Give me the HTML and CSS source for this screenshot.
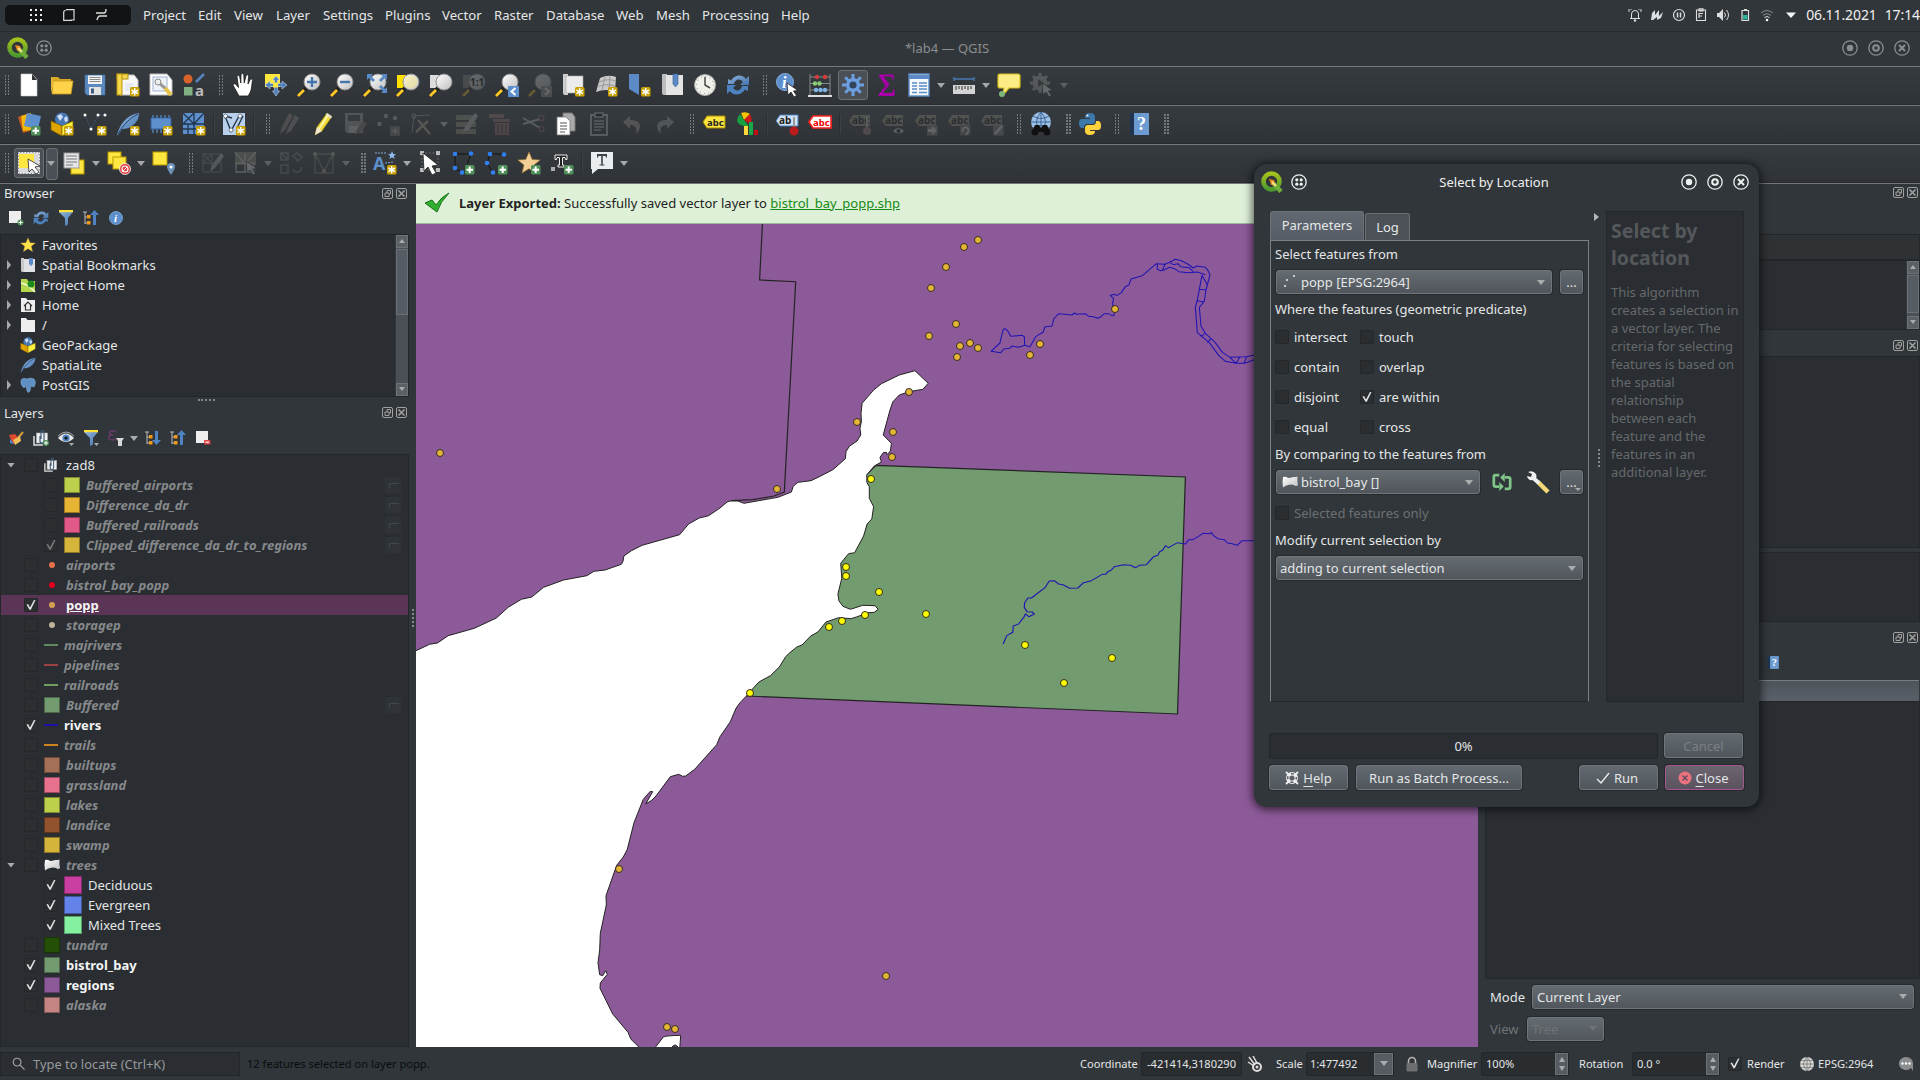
FILE: index.html
```html
<!DOCTYPE html>
<html lang="en">
<head>
<meta charset="utf-8">
<title>*lab4 — QGIS</title>
<link rel="stylesheet" href="styles.css">
</head>
<body>
<svg class="paints" aria-hidden="true">
<defs>
<linearGradient id="gBlue" x1="0" y1="0" x2="1" y2="1"><stop offset="0" stop-color="#8fb3de"/><stop offset="1" stop-color="#4474ad"/></linearGradient>
<linearGradient id="gWhite" x1="0" y1="0" x2="1" y2="1"><stop offset="0" stop-color="#fff"/><stop offset="1" stop-color="#bfbfbf"/></linearGradient>
<linearGradient id="gGreen" x1="0" y1="0" x2="0" y2="1"><stop offset="0" stop-color="#a5c11c"/><stop offset="1" stop-color="#4c9a2f"/></linearGradient>
</defs>
</svg>
<svg class="sprite" aria-hidden="true">
<symbol id="b-new" viewBox="0 0 24 24"><rect x="14" y="14" width="9.500" height="9.500" rx="1.500" fill="#c8a100"/><path d="M18.700 15v7.500M15.400 17l6.600 3.600M22 17l-6.600 3.600" stroke="#fff" stroke-width="1.500"/></symbol>
<symbol id="b-add" viewBox="0 0 24 24"><rect x="14" y="14" width="9.500" height="9.500" rx="1.500" fill="#4f8f58"/><path d="M18.700 15.500v6.500M15.500 18.700h6.500" stroke="#fff" stroke-width="2"/></symbol>
<symbol id="logo" viewBox="0 0 22 22"><circle cx="10.500" cy="10.500" r="8" fill="none" stroke="url(#gGreen)" stroke-width="4.600"/><path d="M11 11l9 9.500" stroke="#6fae3a" stroke-width="4.500"/><path d="M8 8l5 1 1 4-3.500 1z" fill="#f08c1e"/><path d="M11 11l4 4" stroke="#fbe08a" stroke-width="2"/></symbol>
<symbol id="file" viewBox="0 0 24 24"><path d="M4 1h11l5 5.500V23H4z" fill="#fff" stroke="#ccc" stroke-width=".6"/><path d="M15 1v6h5z" fill="#333"/></symbol>
<symbol id="open" viewBox="0 0 24 24"><path d="M1 4h7l2 2h11v4H1z" fill="#d9a928"/><path d="M3 8h20l-2 13H2z" fill="#ffd24a" stroke="#c79a1c" stroke-width=".8"/><path d="M1 4v16l3-11" fill="#e5b738"/></symbol>
<symbol id="save" viewBox="0 0 24 24"><path d="M2 2h20v20H4l-2-2z" fill="#5b8ac0" stroke="#456e9e" stroke-width=".6"/><rect x="5" y="2.500" width="14" height="8.500" fill="#f2f2f2"/><path d="M6.500 4.500h11M6.500 6.500h11M6.500 8.500h11" stroke="#8a8a8a"/><rect x="6" y="14" width="12" height="8" fill="#e3e3e3"/><rect x="8" y="15.500" width="3" height="5" fill="#3d5d85"/></symbol>
<symbol id="layout" viewBox="0 0 24 24"><path d="M4 2h14l4 5v15H4z" fill="#f7f7f7" stroke="#c4c4c4"/><rect x="1" y="1" width="11" height="5" fill="#f6d94a" stroke="#b8920e"/><rect x="1" y="1" width="5" height="21" fill="#f6d94a" stroke="#b8920e"/><rect x="9" y="10" width="9" height="8" fill="#e7ecf4"/><use href="#b-new"/></symbol>
<symbol id="layoutmgr" viewBox="0 0 24 24"><path d="M1 1h17l5 6v15H1z" fill="#fff" stroke="#bbb"/><rect x="4" y="4" width="14" height="14" fill="#eef1f6" stroke="#9fb2d0"/><path d="M9 9l8 7" stroke="#9a9a9a" stroke-width="3"/><circle cx="9" cy="9" r="3" fill="#eee" stroke="#8a8a8a"/><path d="M16 15l6 7" stroke="#e6c24a" stroke-width="4"/></symbol>
<symbol id="style" viewBox="0 0 24 24"><circle cx="6" cy="6" r="4.500" fill="#d9622b"/><path d="M14 9l8-8" stroke="#5585bf" stroke-width="2.500"/><rect x="2" y="14" width="8.500" height="8.500" fill="#7fb182"/><text x="13" y="23" font-size="15" font-weight="bold" fill="#bbb">a</text></symbol>
<symbol id="hand" viewBox="0 0 24 24"><path d="M8 23L2.500 13c-1-2 1-3 2.500-1.500l2.500 3L6 4c0-2 2.400-2 2.800 0l1 6L10 2c.3-2 2.700-2 2.800 0l.4 8 1.800-7c.4-2 2.700-1.500 2.500.5L17 11l2-4c.8-1.800 2.800-1 2.400.8C20.500 13 21 18 17 23z" fill="#fff" stroke="#1a1a1a" stroke-width=".8"/></symbol>
<symbol id="pansel" viewBox="0 0 24 24"><rect x="1" y="1" width="15" height="13" fill="#ffe83d"/><path d="M12 3l3.500 4h-2v3.500H18V8l5 4-5 4v-2.500h-4.500V18h2L12 23l-3.500-5h2v-4.500H6V16l-5-4 5-4v2.500h4.500V7h-2z" fill="#4d80bd" stroke="#d5e2f2" stroke-width=".5"/><rect x="9" y="9.500" width="5" height="5" fill="#ffe83d"/></symbol>
<symbol id="glass" viewBox="0 0 24 24"><path d="M9 15l-8 8" stroke="#222" stroke-width="4"/><path d="M7 17l-6 6" stroke="#ffc928" stroke-width="2.800"/><circle cx="15" cy="9" r="8" fill="url(#gWhite)" stroke="#8c8c8c"/></symbol>
<symbol id="zin" viewBox="0 0 24 24"><use href="#glass"/><path d="M15 4v10M10 9h10" stroke="#4474ad" stroke-width="2.400"/></symbol>
<symbol id="zout" viewBox="0 0 24 24"><use href="#glass"/><path d="M10 9h10" stroke="#4474ad" stroke-width="2.400"/></symbol>
<symbol id="zfull" viewBox="0 0 24 24"><use href="#glass"/><path d="M4 1h6L8 3l4 4-2 2-4-4-2 2zM24 1v6l-2-2-4 4-2-2 4-4-2-2zM24 20h-6l2-2-4-4 2-2 4 4 2-2z" fill="#5a8ac6"/></symbol>
<symbol id="zsel" viewBox="0 0 24 24"><rect x="1" y="2" width="9" height="13" fill="#ffe100"/><use href="#glass"/><circle cx="15" cy="9" r="6.500" fill="#f3e79a" opacity=".6"/></symbol>
<symbol id="zlay" viewBox="0 0 24 24"><rect x="1" y="2" width="9" height="13" fill="#ddd"/><use href="#glass"/></symbol>
<symbol id="znat" viewBox="0 0 24 24"><rect x="1" y="2" width="9" height="13" fill="#888"/><use href="#glass"/><text x="8" y="13" font-size="10" font-weight="bold" fill="#000">1:1</text></symbol>
<symbol id="zlast" viewBox="0 0 24 24"><use href="#glass"/><rect x="13" y="13" width="11" height="11" fill="#5b8fcd"/><path d="M20.500 15l-4 3.500 4 3.500" fill="none" stroke="#fff" stroke-width="2"/></symbol>
<symbol id="znext" viewBox="0 0 24 24"><use href="#glass"/><rect x="13" y="13" width="11" height="11" fill="#999"/><path d="M17 15l4 3.500-4 3.500" fill="none" stroke="#fff" stroke-width="2"/></symbol>
<symbol id="newmap" viewBox="0 0 24 24"><path d="M2 1h5v21H4a2 2 0 01-2-2z" fill="#cfcfcf"/><path d="M5 3h17v17H5z" fill="#ececec" stroke="#aaa" stroke-width=".6"/><use href="#b-new"/></symbol>
<symbol id="new3d" viewBox="0 0 24 24"><path d="M6 5q8-4 16-1l-1 15q-9-4-19 0z" fill="#c9c9c9"/><path d="M5 9q9-4 17-1M3 14q9-4 18-1M11 4l-3 13M16 3l-1 13" stroke="#999" fill="none"/><use href="#b-new"/></symbol>
<symbol id="newbm" viewBox="0 0 24 24"><path d="M2 1h10v21l-5-3-5-3z" fill="#5b8ac6"/><use href="#b-new"/></symbol>
<symbol id="bookm" viewBox="0 0 24 24"><path d="M2 1h5v21H4a2 2 0 01-2-2z" fill="#bdbdbd"/><path d="M6 2h17v20H6z" fill="#e4e4e4"/><path d="M13 1h5v10l-2.500 3L13 11z" fill="#5b8ac6" stroke="#345d93" stroke-width=".6"/></symbol>
<symbol id="clock" viewBox="0 0 24 24"><circle cx="12" cy="12" r="10.500" fill="#f1f1ec" stroke="#a9a9a4"/><path d="M12 4v8l5 3" fill="none" stroke="#4a4a4a" stroke-width="1.500"/><circle cx="12" cy="12" r="8.500" fill="none" stroke="#888" stroke-dasharray="1 3.450"/></symbol>
<symbol id="refresh" viewBox="0 0 24 24"><path d="M2 11V6l3 1.500C9 1 17 1 20 6l3-3v9h-9l3-3c-3-4-8-3-9 2z" fill="url(#gBlue)"/><path d="M22 13v5l-3-1.500C15 23 7 23 4 18l-3 3v-9h9l-3 3c3 4 8 3 9-2z" fill="#4c82c0"/></symbol>
<symbol id="cursor" viewBox="0 0 24 24"><path d="M12 10l1 12 3-3 3 5 2.500-1.500-3-4.500 4.500-.5z" fill="#fff" stroke="#222" stroke-width=".8"/></symbol>
<symbol id="info" viewBox="0 0 24 24"><circle cx="10" cy="9" r="8.500" fill="#5d8fcc" stroke="#86abd8"/><text x="7" y="15" font-size="16" font-style="italic" font-weight="bold" font-family="Liberation Serif,serif" fill="#fff">i</text><use href="#cursor"/></symbol>
<symbol id="abacus" viewBox="0 0 24 24"><path d="M2 1v21M22 1v21M2 4h20M2 10.500h20M2 17h20" stroke="#888"/><path d="M0 23h24" stroke="#ddd" stroke-width="2"/><g fill="#d33c3c"><circle cx="9" cy="4" r="2.200"/><circle cx="17" cy="4" r="2.200"/></g><g fill="#8ccb76"><circle cx="7" cy="10.500" r="2.200"/><circle cx="11.500" cy="10.500" r="2.200"/></g><g fill="#7fb4e6"><circle cx="8" cy="17" r="2.200"/><circle cx="12.500" cy="17" r="2.200"/><circle cx="17" cy="17" r="2.200"/></g></symbol>
<symbol id="gear" viewBox="0 0 24 24"><path d="M12 1v22M1 12h22M4.200 4.200l15.600 15.600M19.800 4.200L4.200 19.800" stroke="#6c9fe0" stroke-width="3"/><circle cx="12" cy="12" r="7" fill="#6c9fe0"/><circle cx="12" cy="12" r="3.600" fill="#33445c"/></symbol>
<symbol id="sigma" viewBox="0 0 24 24"><path d="M5 1.500h14.500v5h-1C18 4 17 3.500 14 3.500H9.500l6 8-6.500 8.500h6c3 0 4-1 4.500-3.500h1V23H4.500v-1.500L11.500 13 5 3z" fill="#a800a8"/></symbol>
<symbol id="table" viewBox="0 0 24 24"><rect x="2" y="1" width="20" height="22" fill="#f5f8fb" stroke="#5b8ac6" stroke-width="1.400"/><path d="M2 4h20" stroke="#5b8ac6" stroke-width="4"/><path d="M5 10h5M5 13h5M5 16h5M5 19.500h5M12 10h8M12 13h8M12 16h8M12 19.500h8" stroke="#5b8ac6" stroke-width="1.500"/></symbol>
<symbol id="ruler" viewBox="0 0 24 24"><path d="M2 6h20M2 4v4M22 4v4" stroke="#4a78b2" stroke-width="1.400"/><rect x="1" y="12" width="22" height="9" fill="#d4d4d4"/><path d="M4 13v4M7 13v3M10 13v4M13 13v3M16 13v4M19 13v3" stroke="#333"/></symbol>
<symbol id="tip" viewBox="0 0 24 24"><path d="M3 1h18q2 0 2 2v10q0 2-2 2h-9l-6 7 1-7H3q-2 0-2-2V3q0-2 2-2z" fill="#fbec86" stroke="#dcbf1d" stroke-width="1.200"/><circle cx="5" cy="21" r="3" fill="#7db57d"/></symbol>
<symbol id="gearrun" viewBox="0 0 24 24"><path d="M10 0v20M0 10h20M3 3l14 14M17 3L3 17" stroke="#bbb" stroke-width="3"/><circle cx="10" cy="10" r="7.500" fill="#bbb"/><path d="M8 6v8l6-4z" fill="#444"/><use href="#cursor"/></symbol>
<symbol id="ds" viewBox="0 0 24 24"><path d="M1 5l9-3 3 17-7 2z" fill="#c65a1e"/><path d="M4 4l10-3 1 17-9 1z" fill="#f0b90b"/><path d="M10 1l14 3-3 13-14-3z" fill="#5d8fcc"/><use href="#b-add"/></symbol>
<symbol id="gpkgbox" viewBox="0 0 24 24"><circle cx="12" cy="7.500" r="7" fill="#4677b4"/><path d="M7 4l4-2 2 3-3 4zM14 6l3-2 1 5-3 1z" fill="#cfe0f2"/><path d="M1 9l11 5v10L1 18z" fill="#e0a500" stroke="#7d5c00" stroke-width=".7"/><path d="M23 9l-11 5v10l11-6z" fill="#fff23d" stroke="#7d5c00" stroke-width=".7"/></symbol>
<symbol id="gpkg" viewBox="0 0 24 24"><use href="#gpkgbox"/><use href="#b-new"/></symbol>
<symbol id="shp" viewBox="0 0 24 24"><path d="M2 3l6 14L15 3h7" fill="none" stroke="#40618f" stroke-dasharray="1.500 1.500"/><g fill="#fff"><circle cx="2" cy="3" r="1.500"/><circle cx="8" cy="17" r="1.500"/><circle cx="15" cy="3" r="1.500"/><circle cx="22" cy="3" r="1.500"/></g><use href="#b-new"/></symbol>
<symbol id="featherbase" viewBox="0 0 24 24"><path d="M1 23C4 12 10 3 23 1c0 6-3 10-6 12-3 3-7 4-11 4l-4 6z" fill="url(#gBlue)"/><path d="M2 22C7 13 14 6 22 2" stroke="#24456f" fill="none"/></symbol>
<symbol id="feather" viewBox="0 0 24 24"><use href="#featherbase"/><use href="#b-new"/></symbol>
<symbol id="memory" viewBox="0 0 24 24"><path d="M4 3v18M8 3v18M12 3v18M16 3v18M20 3v18" stroke="#5d8fcc" stroke-width="1.200"/><rect x="2" y="6" width="20" height="11" fill="#5d8fcc" stroke="#37629b"/><use href="#b-new"/></symbol>
<symbol id="meshnew" viewBox="0 0 24 24"><path d="M1 1h21v21H1z" fill="#5d8fcc"/><path d="M1 12h21M12 1v21M1 1l11 11M12 1L1 12M12 12L22 1M1 17h21M6 12v10" stroke="#203650" stroke-width="1.300"/><use href="#b-new"/></symbol>
<symbol id="virt" viewBox="0 0 24 24"><rect x="1" y="1" width="22" height="22" fill="#b9d0ec"/><path d="M3 4l6 15L17 4M3 4l7 2M21 4l-5 10" fill="none" stroke="#26374c" stroke-width="1.400"/><g fill="#fff" stroke="#26374c" stroke-width=".6"><circle cx="3.500" cy="4" r="2"/><circle cx="9" cy="18" r="2"/><circle cx="18" cy="4" r="2"/></g><use href="#b-new"/></symbol>
<symbol id="pencils" viewBox="0 0 24 24"><path d="M2 22l2-7L11 1l4 3L7 18z" fill="#a58d8d"/><path d="M8 22l2-6L17 3l4 3-8 13z" fill="#9d9595"/></symbol>
<symbol id="pencil" viewBox="0 0 24 24"><path d="M4 23l2-8L16 1l5 3.500L11 19z" fill="#f4dd3b" stroke="#8a7a18" stroke-width=".7"/><path d="M14.500 3L20 6.500 21 4.500 16 1z" fill="#d9d9d9"/><path d="M4 23l2-8 5 4z" fill="#efe7cf"/><path d="M17 3L8 17" stroke="#fff9b8" stroke-width="1.500"/></symbol>
<symbol id="saveed" viewBox="0 0 24 24"><path d="M1 1h18v20H3l-2-2z" fill="#aaa"/><path d="M4 3h12v6H4z" fill="#444"/><path d="M5 14h9v7H5z" fill="#ddd"/><path d="M11 23l2-6 6-8 4 3-6 8z" fill="#8c7d7d"/></symbol>
<symbol id="addpt" viewBox="0 0 24 24"><g fill="#c0c0c0"><circle cx="9" cy="4" r="2.200"/><circle cx="18" cy="6" r="2.200"/><circle cx="2.500" cy="12" r="2.200"/></g><rect x="13" y="14" width="10" height="10" fill="#777"/><path d="M18 15v8M14 17l8 4M22 17l-8 4" stroke="#ddd"/></symbol>
<symbol id="vertex" viewBox="0 0 24 24"><path d="M4 4L2 21M4 4l16-1" fill="none" stroke="#aaa"/><path d="M6 20L18 9M8 8l12 14" fill="none" stroke="#bcb7a0" stroke-width="2.400"/><circle cx="4" cy="4" r="2" fill="none" stroke="#bbb"/></symbol>
<symbol id="attr" viewBox="0 0 24 24"><path d="M1 3h20v5H1zM1 10h20v5H1zM1 17h20v5H1z" fill="#9a9c83"/><path d="M8 20l2-6 10-13 3 3-9 14z" fill="#ccc"/></symbol>
<symbol id="trash" viewBox="0 0 24 24"><path d="M1 2h15v4H1zM5 7h17v3H5zM7 11h14v12H7z" fill="#a97676"/><path d="M10 12v10M14 12v10M18 12v10" stroke="#333"/></symbol>
<symbol id="cut" viewBox="0 0 24 24"><path d="M2 6l17 10M2 12l17-5" stroke="#ccc" stroke-width="2"/><circle cx="20.500" cy="6" r="2.500" fill="none" stroke="#a66" stroke-width="1.200"/><circle cx="20.500" cy="17" r="2.500" fill="none" stroke="#a66" stroke-width="1.200"/></symbol>
<symbol id="copy" viewBox="0 0 24 24"><path d="M9 1h9l3 4v14H9z" fill="#aaa" stroke="#777"/><path d="M3 5h9l4 4v14H3z" fill="#fff" stroke="#777" stroke-width=".8"/><path d="M6 11h7M6 14h7M6 17h7M6 20h5" stroke="#555" stroke-width="1.200"/></symbol>
<symbol id="paste" viewBox="0 0 24 24"><path d="M4 3h16v20H4z" fill="none" stroke="#ccc" stroke-width="2"/><path d="M8 1h8v4H8zM7 9h10M7 12h10M7 15h10M7 18h7" stroke="#ccc" stroke-width="1.500"/></symbol>
<symbol id="undo" viewBox="0 0 24 24"><path d="M3 10l7-6v4c12 0 12 8 6 14 1-6 0-9-6-9v4z" fill="#b5a5a5"/></symbol>
<symbol id="redo" viewBox="0 0 24 24"><path d="M21 10l-7-6v4C2 8 2 16 8 22c-1-6 0-9 6-9v4z" fill="#a5aeb0"/></symbol>
<symbol id="label" viewBox="0 0 24 24"><path d="M1 10l4-6h18v12H5z" fill="#ffe640" stroke="#a98c00"/><text x="5" y="14" font-size="9.500" font-weight="bold" fill="#222">abc</text></symbol>
<symbol id="diagram" viewBox="0 0 24 24"><path d="M9 8L6 1q5-2 9 1z" fill="#f5c400"/><path d="M9 8l6-6q3 6 0 10z" fill="#d01818"/><path d="M9 8l5 6Q4 15 2 9q0-4 3-7z" fill="#18a040"/><rect x="9" y="14" width="4" height="9" fill="#ffd83b"/><rect x="14" y="10" width="4" height="13" fill="#1aa84b"/><rect x="19" y="18" width="4" height="5" fill="#c01010"/></symbol>
<symbol id="lblpin" viewBox="0 0 24 24"><path d="M1 9l4-6h18v11H5z" fill="#d2e4f8" stroke="#4b7fc0"/><text x="4" y="12" font-size="10" font-weight="bold" fill="#222">ab</text><path d="M19 5v10" stroke="#999" stroke-width="2"/><circle cx="19" cy="19" r="4.500" fill="#b81c1c"/></symbol>
<symbol id="lblred" viewBox="0 0 24 24"><path d="M1 10l4-6h18v12H5z" fill="#fff" stroke="#f22" stroke-width="1.600"/><text x="5" y="14" font-size="9.500" font-weight="bold" fill="#e00">abc</text></symbol>
<symbol id="lbltag" viewBox="0 0 24 24"><path d="M1 9l4-6h17v11H5z" fill="#a3a08a"/><text x="4" y="12" font-size="10" font-weight="bold" fill="#111">abc</text></symbol>
<symbol id="lbl1" viewBox="0 0 24 24"><use href="#lbltag"/><path d="M19 4v12" stroke="#ccc" stroke-width="2"/><circle cx="19" cy="19" r="4" fill="#a88"/></symbol>
<symbol id="lbl2" viewBox="0 0 24 24"><use href="#lbltag"/><path d="M12 19q5-6 11 0-6 5-11 0z" fill="#ddd"/><circle cx="17.500" cy="19" r="2" fill="#222"/></symbol>
<symbol id="lbl3" viewBox="0 0 24 24"><use href="#lbltag"/><rect x="13" y="13" width="10.500" height="10.500" fill="#888"/><path d="M14 17h4v-3l5 4.500-5 4.500v-3h-4z" fill="#eee"/></symbol>
<symbol id="lbl4" viewBox="0 0 24 24"><use href="#lbltag"/><rect x="13" y="13" width="10.500" height="10.500" fill="#777"/><path d="M16 20a3 3 0 114 1l-1 2" fill="none" stroke="#eee" stroke-width="1.800"/></symbol>
<symbol id="lbl5" viewBox="0 0 24 24"><use href="#lbltag"/><rect x="13" y="13" width="10.500" height="10.500" fill="#888"/><path d="M15 22l7-8" stroke="#eee" stroke-width="2.500"/></symbol>
<symbol id="globe" viewBox="0 0 24 24"><circle cx="12" cy="10" r="10" fill="#9cc0e5"/><path d="M2 10h20M12 0v20M4 4q8 5 16 0M4 16q8-5 16 0M12 0q-9 10 0 20M12 0q9 10 0 20" fill="none" stroke="#3d6595"/><path d="M3 20l3-7h4l2 3 2-3h4l3 7z" fill="#111"/><circle cx="6" cy="20" r="3.500" fill="#111"/><circle cx="18" cy="20" r="3.500" fill="#111"/></symbol>
<symbol id="python" viewBox="0 0 24 24"><path d="M7 5q0-4 5-4 5 0 5 4v4q0 3-3 3H9q-3 0-3 4H4q-3 0-3-5 0-4 3-4h8V6H7z" fill="#3c78aa"/><path d="M17 19q0 4-5 4-5 0-5-4v-3q0-3 3-3h5q3 0 3-4h2q3 0 3 5 0 4-3 4h-8v1h5z" fill="#ffd33d"/><circle cx="9.500" cy="3.500" r="1" fill="#fff"/></symbol>
<symbol id="help" viewBox="0 0 24 24"><rect x="3" y="1" width="4" height="22" fill="#1e3450"/><rect x="7" y="1" width="15" height="22" fill="#6b9bd1"/><text x="10" y="18" font-size="18" font-family="Liberation Serif,serif" font-weight="bold" fill="#fff">?</text></symbol>
<symbol id="selrect" viewBox="0 0 24 24"><rect x="1.500" y="1.500" width="21" height="21" fill="#d9dadb" stroke="#eee" stroke-dasharray="1.500 1.500"/><rect x="2" y="3" width="15" height="14" fill="#ffe640"/><path d="M11 8l1 13 3-3 4 5 3-2-4-5 5-1z" fill="#fff" stroke="#222" stroke-width=".8"/></symbol>
<symbol id="selval" viewBox="0 0 24 24"><rect x="9" y="9" width="13" height="14" fill="#ffe640" stroke="#b99a00"/><rect x="2" y="2" width="15" height="15" fill="#e4e6ea" stroke="#999"/><path d="M4 5h11M4 8h11M4 11h11M4 14h7" stroke="#777"/></symbol>
<symbol id="desel" viewBox="0 0 24 24"><rect x="1" y="1" width="13" height="12" fill="#ffe640" stroke="#b99a00"/><rect x="6" y="6" width="13" height="12" fill="#ffe640" stroke="#b99a00"/><circle cx="18" cy="18" r="5.500" fill="#e33c3c" stroke="#fff" stroke-width=".8"/><circle cx="18" cy="18" r="3" fill="none" stroke="#fff" stroke-width="1.200"/><path d="M16 20l4-4" stroke="#fff"/></symbol>
<symbol id="selloc" viewBox="0 0 24 24"><rect x="1" y="1" width="14" height="13" fill="#ffe640" stroke="#b99a00"/><path d="M19 24q-4-6-4-8a4 4 0 018 0q0 2-4 8z" fill="#6d94b8"/><circle cx="19" cy="16" r="1.500" fill="#fff"/></symbol>
<symbol id="gridoff" viewBox="0 0 24 24"><path d="M2 3h18v18H2zM2 12h18M11 3v18M2 3l9 9M11 3l-9 9" fill="none" stroke="#777" stroke-width="1.500"/><path d="M9 20l2-6 9-12 3 3-9 12z" fill="#bbb"/></symbol>
<symbol id="gridoff2" viewBox="0 0 24 24"><path d="M1 1h21v13H1z" fill="#8f9276"/><path d="M2 12h18v9H2zM11 3v18M1 1l10 12L22 1" fill="none" stroke="#ddd" stroke-width="1.300"/><use href="#cursor"/></symbol>
<symbol id="gridoff3" viewBox="0 0 24 24"><path d="M2 2h7v7H2zM2 14h7v8H2zM2 2l7 7M14 5l4-3 5 4-4 4zM14 18a4 4 0 108-2" fill="none" stroke="#888" stroke-width="1.500"/></symbol>
<symbol id="gridoff4" viewBox="0 0 24 24"><path d="M3 3h18v19H3zM3 3l9 17L21 3" fill="none" stroke="#888" stroke-width="1.300"/><g fill="#b7b59a"><circle cx="3" cy="3" r="2"/><circle cx="21" cy="3" r="2"/><circle cx="12" cy="20" r="2"/></g></symbol>
<symbol id="anno" viewBox="0 0 24 24"><text x="0" y="19" font-size="18" font-weight="bold" fill="#5d8fcc">A</text><path d="M2 2h11M12 12l8-1" stroke="#7ea7d8" stroke-dasharray="2 1"/><path d="M19 0l1.200 3H23l-2.200 2 .8 3-2.600-1.700L16.400 8l.8-3L15 3h2.800z" fill="#8fbaf0"/><use href="#b-new"/></symbol>
<symbol id="annosel" viewBox="0 0 24 24"><rect x="4" y="2" width="16" height="17" fill="none" stroke="#777" stroke-dasharray="1.500 2"/><g fill="#bbb"><path d="M2 0h4v4H2zM18 0h4v4h-4zM2 17h4v4H2zM18 17h4v4h-4z"/></g><path d="M5 2l1 18 4-4 4 8 4-2-4-7 6-1z" fill="#fff" stroke="#222" stroke-width=".8"/></symbol>
<symbol id="annopoly" viewBox="0 0 24 24"><path d="M4 3h16l-4 10M4 3L4 17l7 5" fill="none" stroke="#111"/><g fill="#2f80f5"><circle cx="4" cy="3" r="2.300"/><circle cx="20" cy="2.500" r="2.300"/><circle cx="4" cy="17" r="2.300"/><circle cx="11" cy="21.500" r="2.300"/></g><use href="#b-add"/></symbol>
<symbol id="annoline" viewBox="0 0 24 24"><path d="M20 3H6L3 12l6 10" fill="none" stroke="#111"/><g fill="#2f80f5"><circle cx="6" cy="3" r="2.300"/><circle cx="20" cy="3.500" r="2.300"/><circle cx="3" cy="12" r="2.300"/><circle cx="9" cy="21.500" r="2.300"/></g><use href="#b-add"/></symbol>
<symbol id="star" viewBox="0 0 24 24"><path d="M12 1l3.200 7.500 8 .5-6.200 5 2 8-7-4.300L5 22l2-8L.8 9l8-.5z" fill="currentColor" stroke="#9b7330" stroke-width=".6"/></symbol>
<symbol id="annostar" viewBox="0 0 24 24"><use href="#star"/><use href="#b-add"/></symbol>
<symbol id="annotext" viewBox="0 0 24 24"><path d="M5 4h12v4.500h-1.500L15 6.500h-2.500V14H14v2H8v-2h1.500V6.500H7L6.500 8.500H5z" fill="#222" stroke="#eee"/><rect x="1" y="16" width="4" height="4" fill="#aaa"/><use href="#b-add"/></symbol>
<symbol id="balloon" viewBox="0 0 24 24"><path d="M1 1h22v17H8l-6 5v-5H1z" fill="#e9edef"/><path d="M7 3h10v3.500h-1L15.500 5h-2.700v8.500h1.700v1h-5v-1h1.700V5H8.500L8 6.500H7z" fill="#3d4246"/></symbol>
<symbol id="filter" viewBox="0 0 16 16"><path d="M1 2l6 6v8l3-1.500V8l5-6z" fill="url(#gBlue)"/><path d="M1 1h14" stroke="#ffe23a" stroke-width="2.400"/></symbol>
<symbol id="collapse" viewBox="0 0 16 16"><path d="M0 2h4M2 2v12M2 7h5M2 13h5" stroke="#bbb"/><rect x="4" y="5" width="3.500" height="3.500" fill="#f09a1e"/><rect x="4" y="11" width="3.500" height="3.500" fill="#f09a1e"/><path d="M11.500 0L16 5h-3v10h-3V5H7z" fill="#4f83c2"/></symbol>
<symbol id="expand" viewBox="0 0 16 16"><path d="M0 2h4M2 2v12M2 7h5M2 13h5" stroke="#bbb"/><rect x="4" y="5" width="3.500" height="3.500" fill="#f09a1e"/><rect x="4" y="11" width="3.500" height="3.500" fill="#f09a1e"/><path d="M11.500 15L16 10h-3V1h-3v9H7z" fill="#4f83c2"/></symbol>
<symbol id="infos" viewBox="0 0 16 16"><circle cx="8" cy="8" r="6.500" fill="#5d8fcc" stroke="#86abd8" stroke-width=".8"/><text x="6" y="12" font-size="11" font-style="italic" font-weight="bold" font-family="Liberation Serif,serif" fill="#fff">i</text></symbol>
<symbol id="boxadd" viewBox="0 0 16 16"><rect x="1" y="1" width="12" height="12" fill="#eee"/><circle cx="12.500" cy="12.500" r="3" fill="#4f8f58"/><path d="M12.500 10.500v4M10.500 12.500h4" stroke="#fff"/></symbol>
<symbol id="boxdel" viewBox="0 0 16 16"><rect x="1" y="1" width="12" height="12" fill="#eee"/><rect x="9" y="10" width="6.500" height="4.500" rx="1" fill="#e04545"/><path d="M10.500 12.200h3.500" stroke="#fff" stroke-width="1.200"/></symbol>
<symbol id="brush" viewBox="0 0 16 16"><path d="M10 8l5-6" stroke="#c99b3b" stroke-width="2.200"/><path d="M1 5l6-1 4 5-6 5z" fill="#e04a2e"/><path d="M5 10l7-4 1 5-6 4z" fill="#f0bf57"/><path d="M2 9l4 5-4-1z" fill="#4a8ae0"/></symbol>
<symbol id="group" viewBox="0 0 16 16"><path d="M1 6v9h9" fill="none" stroke="#ddd" stroke-width="1.500"/><rect x="3.500" y="3" width="11" height="10" fill="#eee" stroke="#aaa" stroke-width=".6"/><path d="M7 6v5a2 2 0 004 0V2a1.500 1.500 0 00-3 0v7" fill="none" stroke="#3e5c78" stroke-width="1.200"/></symbol>
<symbol id="groupadd" viewBox="0 0 16 16"><use href="#group"/><circle cx="13" cy="13" r="3" fill="#4f8f58"/><path d="M13 11v4M11 13h4" stroke="#fff"/></symbol>
<symbol id="eye" viewBox="0 0 16 16"><path d="M0 8q8-9 16 0-8 8-16 0z" fill="#e8e8e8"/><circle cx="8" cy="8" r="3.600" fill="#4f83c2"/><circle cx="8" cy="8" r="1.600" fill="#111"/><path d="M0 6q8-8 16 0" fill="none" stroke="#aaa"/><path d="M11 13h5l-2.500 3z" fill="#a9abad"/></symbol>
<symbol id="filterdn" viewBox="0 0 16 16"><use href="#filter"/><path d="M11 13h5l-2.500 3z" fill="#a9abad"/></symbol>
<symbol id="eps" viewBox="0 0 16 16"><path d="M8 2Q2-1 1.500 3 2 5 5 5-1 5 1 9q3 2 7 0" fill="none" stroke="#6a3a6a" stroke-width="1.500"/><path d="M8 8h8l-2 3v5h-4v-5z" fill="#d9d9d9"/></symbol>
<symbol id="bm16" viewBox="0 0 16 16"><path d="M1 1h3v14H2l-1-1z" fill="#c9c9c9"/><path d="M4 2h11v13H4z" fill="#dfe1e4"/><path d="M9 1h4v6l-2 2-2-2z" fill="#5b8ac6"/></symbol>
<symbol id="prjhome" viewBox="0 0 16 16"><path d="M1 2h6l1 2h7v11H1z" fill="#b4d84b"/><path d="M1 6q7 1 14 9" stroke="#f4f8d8" fill="none" stroke-width="1.500"/><circle cx="11" cy="7" r="3.500" fill="#1d8a1d"/></symbol>
<symbol id="folder" viewBox="0 0 16 16"><path d="M1 1h5l1.500 2H15v12H1z" fill="#eee"/></symbol>
<symbol id="home" viewBox="0 0 16 16"><use href="#folder"/><path d="M4 9l4-4 4 4M5.500 8v5h5V8" fill="none" stroke="#333" stroke-width="1.200"/></symbol>
<symbol id="elephant" viewBox="0 0 16 16"><path d="M1 3q2-3 6-1 4-2 7 0 3 3 0 8l-3-1-1 5q-2 3-3 0l-1-5-2 2Q0 8 1 3z" fill="#5f90c4" stroke="#88aed6" stroke-width=".5"/></symbol>
<symbol id="poly" viewBox="0 0 16 12"><path d="M1 1q3-1 5 1 3 0 5-1 3 0 4.500-.5Q15 5 16 9q-2 2-4 0-3-1-6 0-2 0-5 2.500Q0 6 1 1z" fill="url(#gWhite)"/></symbol>
<symbol id="float" viewBox="0 0 11 11"><rect x=".5" y=".5" width="10" height="10" rx="1.500" fill="none" stroke="#a0a19f"/><path d="M3 5h4v3.500H3zM5 5V2.500h3.500V6H7" fill="none" stroke="#a0a19f"/></symbol>
<symbol id="closed" viewBox="0 0 11 11"><rect x=".5" y=".5" width="10" height="10" rx="1.500" fill="none" stroke="#a0a19f"/><path d="M2.500 2.500l6 6M8.500 2.500l-6 6" stroke="#a0a19f" stroke-width="1.600"/></symbol>
<symbol id="w-dots" viewBox="0 0 16 16"><circle cx="8" cy="8" r="7.200" fill="none" stroke="currentColor" stroke-width="1.300"/><g fill="currentColor"><circle cx="5.800" cy="5.800" r="1.600"/><circle cx="10.200" cy="5.800" r="1.600"/><circle cx="5.800" cy="10.200" r="1.600"/><circle cx="10.200" cy="10.200" r="1.600"/></g></symbol>
<symbol id="w-min" viewBox="0 0 16 16"><circle cx="8" cy="8" r="7.200" fill="none" stroke="currentColor" stroke-width="1.300"/><circle cx="8" cy="8" r="3.200" fill="currentColor"/></symbol>
<symbol id="w-max" viewBox="0 0 16 16"><circle cx="8" cy="8" r="7.200" fill="none" stroke="currentColor" stroke-width="1.300"/><circle cx="8" cy="8" r="2.800" fill="none" stroke="currentColor" stroke-width="2"/></symbol>
<symbol id="w-close" viewBox="0 0 16 16"><circle cx="8" cy="8" r="7.200" fill="none" stroke="currentColor" stroke-width="1.300"/><path d="M5 5l6 6M11 5l-6 6" stroke="currentColor" stroke-width="2"/></symbol>
</svg>

<header class="menubar">
  <div class="launcher">
    <svg width="14" height="14" viewBox="0 0 14 14"><path d="M2 1v12M7 1v12M12 1v12" stroke="#eee" stroke-width="2" stroke-dasharray="2 3"/></svg>
    <svg width="12" height="12" viewBox="0 0 12 12"><path d="M3 .7h8v8M9 11.300H.7v-8a2 2 0 012-2M11 9v2H8" fill="none" stroke="#ddd" stroke-width="1.200"/></svg>
    <svg width="13" height="12" viewBox="0 0 13 12"><path d="M1 4h8q2 0 2-4M12 7H5q-2 0-3 4" fill="none" stroke="#ddd" stroke-width="1.400"/></svg>
  </div>
  <nav class="menus"><span>Project</span><span>Edit</span><span>View</span><span>Layer</span><span>Settings</span><span>Plugins</span><span>Vector</span><span>Raster</span><span>Database</span><span>Web</span><span>Mesh</span><span>Processing</span><span>Help</span></nav>
  <div class="tray">
    <svg viewBox="0 0 14 14"><path d="M3.500 10V6q0-3.500 3.500-3.500T10.500 6v4M2 10.500h10M1 1v3M13 1v3M3 1v1M11 1v1" fill="none" stroke="#ddd"/><circle cx="7" cy="12.500" r="1.200" fill="#ddd"/></svg>
    <svg viewBox="0 0 14 14"><path d="M1 12l1-7 3-3v5l4-5v6l4-4-2 6-4 2V9l-4 3z" fill="#ddd"/></svg>
    <svg viewBox="0 0 14 14"><circle cx="7" cy="7" r="5.500" fill="none" stroke="#ddd" stroke-width="1.200"/><path d="M5.500 4.500v5M8.500 4.500v5" stroke="#ddd" stroke-width="1.500"/></svg>
    <svg viewBox="0 0 14 14"><path d="M2.500 2h9v10.500h-9zM5 .8h4V3H5zM5 5.500h4M5 8h3M5 5v5" fill="none" stroke="#ddd" stroke-width="1.100"/></svg>
    <svg viewBox="0 0 14 14"><path d="M1 5h2l4-4v12L3 9H1z" fill="#ddd"/><path d="M8.500 4.500q2 2.500 0 5M10.500 2q4 5 0 10" fill="none" stroke="#ddd"/></svg>
    <svg viewBox="0 0 14 14"><path d="M4 2.500h6.500v10H4z" fill="none" stroke="#ddd" stroke-width="1.200"/><path d="M6 1h3v1H6z" fill="#ddd"/><path d="M5 7h4.500v4.500H5z" fill="#2bb5a0"/></svg>
    <svg viewBox="0 0 14 14"><path d="M1 5q6-5 12 0M3 7.500q4-3.500 8 0" fill="none" stroke="#8a8d90"/><path d="M4.500 9.500q2.500-2 5 0" fill="none" stroke="#ddd"/><circle cx="7" cy="12" r="1.300" fill="#fff"/></svg>
    <svg viewBox="0 0 14 14"><path d="M2 4.500h10L7 10z" fill="#f5f5f5"/></svg>
    <span>06.11.2021</span><span>17:14</span>
  </div>
</header>

<div class="titlebar">
  <svg class="logo"><use href="#logo"/></svg><svg class="wb"><use href="#w-dots"/></svg>
  <span class="wtitle">*lab4 — QGIS</span>
  <svg class="wb"><use href="#w-min"/></svg><svg class="wb"><use href="#w-max"/></svg><svg class="wb"><use href="#w-close"/></svg>
</div>

<div class="toolbar">
  <i class="grip"></i>
  <b class="t"><svg><use href="#file"/></svg></b><b class="t"><svg><use href="#open"/></svg></b><b class="t"><svg><use href="#save"/></svg></b><b class="t"><svg><use href="#layout"/></svg></b><b class="t"><svg><use href="#layoutmgr"/></svg></b><b class="t"><svg><use href="#style"/></svg></b>
  <i class="grip"></i>
  <b class="t"><svg><use href="#hand"/></svg></b><b class="t"><svg><use href="#pansel"/></svg></b><b class="t"><svg><use href="#zin"/></svg></b><b class="t"><svg><use href="#zout"/></svg></b><b class="t"><svg><use href="#zfull"/></svg></b><b class="t"><svg><use href="#zsel"/></svg></b><b class="t"><svg><use href="#zlay"/></svg></b><b class="t off"><svg><use href="#znat"/></svg></b><b class="t"><svg><use href="#zlast"/></svg></b><b class="t off"><svg><use href="#znext"/></svg></b><b class="t"><svg><use href="#newmap"/></svg></b><b class="t"><svg><use href="#new3d"/></svg></b><b class="t"><svg><use href="#newbm"/></svg></b><b class="t"><svg><use href="#bookm"/></svg></b><b class="t"><svg><use href="#clock"/></svg></b><b class="t"><svg><use href="#refresh"/></svg></b>
  <i class="grip"></i>
  <b class="t"><svg><use href="#info"/></svg></b><b class="t"><svg><use href="#abacus"/></svg></b><b class="t on"><svg><use href="#gear"/></svg></b><b class="t"><svg><use href="#sigma"/></svg></b><b class="t drop"><svg><use href="#table"/></svg></b><b class="t drop"><svg><use href="#ruler"/></svg></b><b class="t"><svg><use href="#tip"/></svg></b><b class="t drop off"><svg><use href="#gearrun"/></svg></b>
</div>
<div class="toolbar">
  <i class="grip"></i>
  <b class="t"><svg><use href="#ds"/></svg></b><b class="t"><svg><use href="#gpkg"/></svg></b><b class="t"><svg><use href="#shp"/></svg></b><b class="t"><svg><use href="#feather"/></svg></b><b class="t"><svg><use href="#memory"/></svg></b><b class="t"><svg><use href="#meshnew"/></svg></b><i class="sep"></i><b class="t"><svg><use href="#virt"/></svg></b><i class="sep"></i>
  <i class="grip"></i>
  <b class="t off"><svg><use href="#pencils"/></svg></b><b class="t"><svg><use href="#pencil"/></svg></b><b class="t off"><svg><use href="#saveed"/></svg></b><b class="t off"><svg><use href="#addpt"/></svg></b><b class="t drop off"><svg><use href="#vertex"/></svg></b><b class="t off"><svg><use href="#attr"/></svg></b><b class="t off"><svg><use href="#trash"/></svg></b><b class="t off"><svg><use href="#cut"/></svg></b><b class="t"><svg><use href="#copy"/></svg></b><b class="t off"><svg><use href="#paste"/></svg></b><b class="t off"><svg><use href="#undo"/></svg></b><b class="t off"><svg><use href="#redo"/></svg></b>
  <i class="grip"></i>
  <b class="t"><svg><use href="#label"/></svg></b><b class="t"><svg><use href="#diagram"/></svg></b><i class="sep"></i><b class="t"><svg><use href="#lblpin"/></svg></b><b class="t"><svg><use href="#lblred"/></svg></b><i class="sep"></i><b class="t off"><svg><use href="#lbl1"/></svg></b><b class="t off"><svg><use href="#lbl2"/></svg></b><b class="t off"><svg><use href="#lbl3"/></svg></b><b class="t off"><svg><use href="#lbl4"/></svg></b><b class="t off"><svg><use href="#lbl5"/></svg></b>
  <i class="grip"></i><b class="t"><svg><use href="#globe"/></svg></b>
  <i class="grip"></i><b class="t"><svg><use href="#python"/></svg></b>
  <i class="grip"></i><b class="t"><svg><use href="#help"/></svg></b><i class="grip"></i>
</div>
<div class="toolbar">
  <i class="grip"></i>
  <b class="t drop on"><svg><use href="#selrect"/></svg></b><b class="t drop"><svg><use href="#selval"/></svg></b><b class="t drop"><svg><use href="#desel"/></svg></b><b class="t"><svg><use href="#selloc"/></svg></b>
  <i class="grip"></i>
  <b class="t off"><svg><use href="#gridoff"/></svg></b><b class="t drop off"><svg><use href="#gridoff2"/></svg></b><b class="t off"><svg><use href="#gridoff3"/></svg></b><b class="t drop off"><svg><use href="#gridoff4"/></svg></b>
  <i class="grip"></i>
  <b class="t drop"><svg><use href="#anno"/></svg></b><b class="t"><svg><use href="#annosel"/></svg></b><b class="t"><svg><use href="#annopoly"/></svg></b><b class="t"><svg><use href="#annoline"/></svg></b><b class="t peach"><svg><use href="#annostar"/></svg></b><b class="t"><svg><use href="#annotext"/></svg></b><i class="sep"></i><b class="t drop"><svg><use href="#balloon"/></svg></b>
</div>

<main class="work">
  <aside class="left">
    <div class="dockhead"><span>Browser</span><svg><use href="#float"/></svg><svg><use href="#closed"/></svg></div>
    <div class="docktools"><svg><use href="#boxadd"/></svg><svg><use href="#refresh"/></svg><svg><use href="#filter"/></svg><svg><use href="#collapse"/></svg><svg><use href="#infos"/></svg></div>
    <div class="tree browser">
      <div class="items">
        <div class="br"><i></i><svg class="gold"><use href="#star"/></svg>Favorites</div>
        <div class="br"><i class="tri"></i><svg><use href="#bm16"/></svg>Spatial Bookmarks</div>
        <div class="br"><i class="tri"></i><svg><use href="#prjhome"/></svg>Project Home</div>
        <div class="br"><i class="tri"></i><svg><use href="#home"/></svg>Home</div>
        <div class="br"><i class="tri"></i><svg><use href="#folder"/></svg>/</div>
        <div class="br"><i></i><svg><use href="#gpkgbox"/></svg>GeoPackage</div>
        <div class="br"><i></i><svg><use href="#featherbase"/></svg>SpatiaLite</div>
        <div class="br"><i class="tri"></i><svg><use href="#elephant"/></svg>PostGIS</div>
      </div>
      <div class="scroll"><i class="sbtn up"></i><i class="thumb"></i><i class="rest"></i><i class="sbtn"></i></div>
    </div>
    <div class="hgrip"></div>
    <div class="dockhead lay"><span>Layers</span><svg><use href="#float"/></svg><svg><use href="#closed"/></svg></div>
    <div class="docktools"><svg><use href="#brush"/></svg><svg><use href="#groupadd"/></svg><svg><use href="#eye"/></svg><svg><use href="#filterdn"/></svg><svg><use href="#eps"/></svg><i class="dn"></i><svg><use href="#expand"/></svg><svg><use href="#collapse"/></svg><svg><use href="#boxdel"/></svg></div>
    <div class="tree layers">
      <div class="lr n"><i class="ex open"></i><i class="ck"></i><svg class="ic"><use href="#group"/></svg>zad8</div>
      <div class="lr sub"><i class="ex"></i><i class="ck"></i><i class="sw" style="background:#bdcf4b"></i>Buffered_airports<i class="chip"></i></div>
      <div class="lr sub"><i class="ex"></i><i class="ck"></i><i class="sw" style="background:#e6b432"></i>Difference_da_dr<i class="chip"></i></div>
      <div class="lr sub"><i class="ex"></i><i class="ck"></i><i class="sw" style="background:#e15989"></i>Buffered_railroads<i class="chip"></i></div>
      <div class="lr sub"><i class="ex"></i><i class="ck y dim"></i><i class="sw" style="background:#d5b43c"></i>Clipped_difference_da_dr_to_regions<i class="chip"></i></div>
      <div class="lr"><i class="ex"></i><i class="ck"></i><i class="pt" style="background:#e77148"></i>airports</div>
      <div class="lr"><i class="ex"></i><i class="ck"></i><i class="pt" style="background:#e3001f"></i>bistrol_bay_popp</div>
      <div class="lr v sel"><i class="ex"></i><i class="ck y"></i><i class="pt" style="background:#d5a04f"></i><u>popp</u></div>
      <div class="lr"><i class="ex"></i><i class="ck"></i><i class="pt" style="background:#beb297"></i>storagep</div>
      <div class="lr"><i class="ex"></i><i class="ck"></i><i class="ln" style="background:#5f8a5f"></i>majrivers</div>
      <div class="lr"><i class="ex"></i><i class="ck"></i><i class="ln" style="background:#9c4245"></i>pipelines</div>
      <div class="lr"><i class="ex"></i><i class="ck"></i><i class="ln" style="background:#719e5c"></i>railroads</div>
      <div class="lr"><i class="ex"></i><i class="ck"></i><i class="sw" style="background:#729b6f"></i>Buffered<i class="chip"></i></div>
      <div class="lr v"><i class="ex"></i><i class="ck y"></i><i class="ln" style="background:#1c12a8"></i>rivers</div>
      <div class="lr"><i class="ex"></i><i class="ck"></i><i class="ln" style="background:#cf8420"></i>trails</div>
      <div class="lr"><i class="ex"></i><i class="ck"></i><i class="sw" style="background:#a47158"></i>builtups</div>
      <div class="lr"><i class="ex"></i><i class="ck"></i><i class="sw" style="background:#e8718d"></i>grassland</div>
      <div class="lr"><i class="ex"></i><i class="ck"></i><i class="sw" style="background:#bdcf4b"></i>lakes</div>
      <div class="lr"><i class="ex"></i><i class="ck"></i><i class="sw" style="background:#91522d"></i>landice</div>
      <div class="lr"><i class="ex"></i><i class="ck"></i><i class="sw" style="background:#d5b43c"></i>swamp</div>
      <div class="lr"><i class="ex open"></i><i class="ck"></i><svg class="ic pg"><use href="#poly"/></svg>trees</div>
      <div class="lr sub n"><i class="ex"></i><i class="ck y"></i><i class="sw big" style="background:#c93fa1"></i>Deciduous</div>
      <div class="lr sub n"><i class="ex"></i><i class="ck y"></i><i class="sw big" style="background:#6382ea"></i>Evergreen</div>
      <div class="lr sub n"><i class="ex"></i><i class="ck y"></i><i class="sw big" style="background:#84f0a0"></i>Mixed Trees</div>
      <div class="lr"><i class="ex"></i><i class="ck"></i><i class="sw" style="background:#235006"></i>tundra</div>
      <div class="lr v"><i class="ex"></i><i class="ck y"></i><i class="sw" style="background:#729b6f"></i>bistrol_bay</div>
      <div class="lr v"><i class="ex"></i><i class="ck y"></i><i class="sw" style="background:#8d5a99"></i>regions</div>
      <div class="lr"><i class="ex"></i><i class="ck"></i><i class="sw" style="background:#c58683"></i>alaska</div>
    </div>
  </aside>
  <div class="vsplit"><i></i></div>

  <section class="canvas">
    <div class="msg"><svg viewBox="0 0 26 22"><path d="M1 11l7-3 4 5Q17 5 25 1 16 10 13 20z" fill="#2fae2f" stroke="#147014"/></svg><p><strong>Layer Exported:</strong> Successfully saved vector layer to <a>bistrol_bay_popp.shp</a></p></div>
    <svg class="map" viewBox="416 224 1062 823">
      <rect x="416" y="223" width="1062" height="824" fill="#8d5a99"/>
      <g fill="none" stroke="#232323" stroke-width="1.200">
        <path d="M762.500 223L759.600 280 795.700 281.700 784.300 492 774 496 752.900 499.700 731.400 500.700"/>
        <path fill="#729b6f" d="M876 465.300L1185.400 477 1177.500 714 746 696 800 560 830 520 866 475z"/>
        <path fill="#fff" stroke-width="1" d="M410 653L416 650.700 429.600 644.300 437.500 643 448.200 635.700 474.300 628.300 496.400 618 508.200 607.300 521.400 599.300 531.800 597 543.600 587.300 563.600 580 586.800 575.700 593.900 571.300 605 570 621.400 564.300 622.900 561.700 623.900 556 631.400 550.700 642.100 545.300 679.600 534.700 688.600 524 699.300 518 708.600 515.700 720 508 727.100 502 730 501 737.900 501 743.900 503.300 777.900 497.300 791.400 492 793.200 486.300 797.900 482.300 811 480.700 820.700 476 832.900 469.700 845.400 458.700 846 451.700 849.300 446.300 857.100 441 860.700 435 860 428.300 861.400 421.700 861 413.300 862.100 403.300 873.600 390 881.400 383.700 899.300 375 915 370.700 928.200 383.300 922.900 389.300 908.900 391.700 899.300 395 892.900 401.700 890 410 883.200 435 891.400 443.300 890.400 451 887.100 454.700 886.400 452.300 883.200 452.700 880 457.300 881.400 462 874.300 466 866.800 474.700 866.800 482.300 869.300 486.700 869.300 498.300 873.600 506.700 871.800 519 867.100 524 863.600 536 854.600 552.700 848.600 553.700 840.700 563.300 841.800 578.300 837.900 594 838.900 600.700 842.900 606.300 850.400 609.300 862.900 605.300 875 605.700 878.200 609.300 874.300 612.300 868.200 612.700 856.400 617 851 618.700 838.600 617.700 826 622 817.900 632 810.700 636 802 645 796.800 647 788.600 653.700 785.700 656.700 779.300 667 770.400 675.700 758.900 682 750 691.700 745.700 696.700 740 702.700 736 708.300 730.300 721.700 720 736.700 716.700 744.700 694.700 769.300 685.700 776 682.700 776.300 678.700 774.300 670.300 776.700 656 796 651.700 800.300 645.700 804 652.700 791.700 650.300 791.300 643.300 799.300 634 822.700 627.300 849.300 623.300 857 616.700 865.300 606 895.700 606.300 905 600.300 933.300 599.700 950 598 962.700 599.700 974.700 602.700 975.700 605.700 970.700 607.300 974.300 600.300 983 600 988.300 612.700 1014 628 1032.300 631 1039.300 641 1049 410 1049z"/>
        <path fill="#fff" stroke-width="1" d="M654 1049L663.300 1037Q666 1035.600 680.700 1035.300L679.700 1049z"/>
        <path fill="#8d5a99" stroke-width="1" d="M672 1047q3-4 6 0z"/>
      </g>
      <g transform="translate(920 220) scale(.33333)" fill="none" stroke="#1f14b4" stroke-width="3.200" stroke-linejoin="round">
        <path d="M213 394L240 369 244 350 250 328 256 326 264 334 272 349 306 346 313 350 314 376 330 380 347 350 370 336 374 321 396 318 401 297 416 281 456 285 463 279 470 283 496 281 506 289 520 290 533 295 543 290 553 281 566 281 576 287 583 285 579 262 578 248 581 236 571 226 584 223 590 227 604 218 616 200 627 194 633 177 667 167 709 131 735 133 750 126 766 118 784 122 803 132 820 144 830 138 856 142 863 150 870 164 858 210 853 243 838 262 843 318 856 340 886 368 908 398 930 412 980 410 1006 404"/>
        <path d="M213 394L242 398 252 387 268 385 276 378 296 382 314 376M712 132L712 148 722 152 732 150 748 142 764 146 776 155 806 158 832 156 856 164M735 132L727 152M750 128L760 134 774 131 782 140 808 143 820 156M846 166L838 208 832 240 826 262 832 338 868 368 896 406 916 424 948 430 974 430 1006 418M846 166L862 194M838 208L858 210M832 242L853 246M856 340L842 350M873 356L862 368M930 412L948 430 960 411M980 410L972 430"/>
      </g>
      <g transform="translate(700 440) scale(.35714 .33333)" fill="none" stroke="#1f14b4" stroke-width="3.200" stroke-linejoin="round">
        <path d="M849 612L859 587 876 577 877 558 892 552 908 530 911 522 921 530 936 522 930 516 916 515 908 503 909 488 918 474 928 474 966 443 978 423 992 422 1004 432 1016 434 1035 445 1058 444 1074 428 1096 422 1126 403 1136 403 1142 395 1152 390 1160 380 1186 374 1206 376 1220 383 1230 376 1250 374 1270 350 1282 346 1287 335 1296 330 1303 317 1312 323 1337 308 1360 312 1368 299 1380 299 1396 289 1408 280 1428 281 1432 277 1438 287 1450 296 1468 299 1477 309 1490 311 1504 316 1518 302 1560 302"/>
      </g>
      <g fill="#e5b636" stroke="#332a20">
        <circle cx="978" cy="240" r="3.500"/><circle cx="964" cy="247" r="3.500"/><circle cx="946" cy="267" r="3.500"/><circle cx="931" cy="288" r="3.500"/><circle cx="956" cy="324" r="3.500"/><circle cx="929" cy="336" r="3.500"/><circle cx="960" cy="346" r="3.500"/><circle cx="970" cy="343" r="3.500"/><circle cx="978" cy="348" r="3.500"/><circle cx="957" cy="357" r="3.500"/><circle cx="1040" cy="344" r="3.500"/><circle cx="1030" cy="355" r="3.500"/><circle cx="1115" cy="309" r="3.500"/><circle cx="909" cy="392" r="3.500"/><circle cx="857" cy="422" r="3.500"/><circle cx="893" cy="432" r="3.500"/><circle cx="892" cy="457" r="3.500"/><circle cx="777" cy="489" r="3.500"/><circle cx="440" cy="453" r="3.500"/><circle cx="619" cy="869" r="3.500"/><circle cx="667" cy="1027" r="3.500"/><circle cx="675" cy="1029" r="3.500"/><circle cx="886" cy="976" r="3.500"/>
      </g>
      <g fill="#ff0" stroke="#332a20">
        <circle cx="871" cy="479" r="3.500"/><circle cx="846" cy="567" r="3.500"/><circle cx="846" cy="576" r="3.500"/><circle cx="879" cy="592" r="3.500"/><circle cx="926" cy="614" r="3.500"/><circle cx="865" cy="615" r="3.500"/><circle cx="842" cy="621" r="3.500"/><circle cx="829" cy="627" r="3.500"/><circle cx="1025" cy="645" r="3.500"/><circle cx="1112" cy="658" r="3.500"/><circle cx="1064" cy="683" r="3.500"/><circle cx="750" cy="693" r="3.500"/>
      </g>
    </svg>
  </section>

  <aside class="right">
    <div class="rhead r1"><svg><use href="#float"/></svg><svg><use href="#closed"/></svg></div>
    <div class="rbox strip"></div>
    <div class="rbox list"><div class="scroll"><i class="sbtn up"></i><i class="thumb"></i><i class="rest"></i><i class="sbtn"></i></div></div>
    <div class="rhead r2"><svg><use href="#float"/></svg><svg><use href="#closed"/></svg></div>
    <div class="rbox b3"></div>
    <div class="rbox b4"></div>
    <div class="rhead r3"><svg><use href="#float"/></svg><svg><use href="#closed"/></svg></div>
    <div class="rtools"><svg><use href="#help"/></svg></div>
    <div class="colhead"></div>
    <div class="rbox fill"></div>
    <div class="modeform">
      <div class="mrow"><label>Mode</label><div class="combo">Current Layer<i class="dn"></i></div></div>
      <div class="mrow off2"><label>View</label><div class="combo small">Tree<i class="dn"></i></div></div>
    </div>
  </aside>
</main>

<footer class="status">
  <div class="locator"><svg viewBox="0 0 14 14"><circle cx="5.500" cy="5.500" r="4.200" fill="none" stroke="#a5a8aa" stroke-width="1.200"/><path d="M8.500 8.500l5 5" stroke="#a5a8aa" stroke-width="1.200"/></svg>Type to locate (Ctrl+K)</div>
  <span class="note">12 features selected on layer popp.</span>
  <span>Coordinate</span><div class="field">-421414,3180290</div>
  <svg class="s16" viewBox="0 0 16 16"><circle cx="10" cy="11" r="4" fill="none" stroke="#ddd" stroke-width="2"/><circle cx="10" cy="11" r="1.500" fill="#ddd"/><path d="M2 1l6 8M6 0l4 7M1 6l6 4" stroke="#ddd" stroke-width="1.500"/></svg>
  <span>Scale</span><div class="field fcombo"><span>1:477492</span><b><i class="dn"></i></b></div>
  <svg class="s16 lock" viewBox="0 0 14 16"><path d="M3.500 8V5a3.500 3.500 0 017 0v3" fill="none" stroke="#b5b5b5" stroke-width="1.600"/><rect x="1.500" y="7" width="11" height="8.500" rx="1" fill="#6e6f70"/></svg>
  <span>Magnifier</span><div class="field fspin"><span>100%</span><b><i class="upa"></i><i class="dn"></i></b></div>
  <span>Rotation</span><div class="field fspin"><span>0.0 °</span><b><i class="upa"></i><i class="dn"></i></b></div>
  <i class="ck y"></i><span>Render</span>
  <svg class="s16" viewBox="0 0 16 16"><circle cx="8" cy="8" r="7" fill="#d8d8d4"/><path d="M1 8h14M8 1v14M2 4.500h12M2 11.500h12M8 1Q1 8 8 15M8 1q7 7 0 14" fill="none" stroke="#777" stroke-width=".8"/></svg>
  <span>EPSG:2964</span>
  <svg class="s16" viewBox="0 0 16 16"><path d="M8 1a7 6.500 0 105 11l2 3V8a7 6.500 0 00-7-7z" fill="#8b8d8e"/><g fill="#fff"><circle cx="4.500" cy="7.500" r="1.200"/><circle cx="8" cy="7.500" r="1.200"/><circle cx="11.500" cy="7.500" r="1.200"/></g></svg>
</footer>

<div class="dialog">
  <div class="dtitle"><svg class="logo"><use href="#logo"/></svg><svg class="wb"><use href="#w-dots"/></svg><span>Select by Location</span><svg class="wb"><use href="#w-min"/></svg><svg class="wb"><use href="#w-max"/></svg><svg class="wb"><use href="#w-close"/></svg></div>
  <div class="dbody">
    <div class="params">
      <div class="tabs"><span class="tab cur">Parameters</span><span class="tab">Log</span></div>
      <div class="pane">
        <p class="lb">Select features from</p>
        <div class="prow"><div class="combo"><svg viewBox="0 0 16 16"><g fill="#eee"><circle cx="3" cy="12" r="1"/><circle cx="5" cy="6" r="1"/><circle cx="12" cy="2" r="1"/></g></svg>popp [EPSG:2964]<i class="dn"></i></div><span class="btn dots">...</span></div>
        <p class="lb">Where the features (geometric predicate)</p>
        <div class="preds">
          <i class="ck"></i><span>intersect</span><i class="ck"></i><span>touch</span>
          <i class="ck"></i><span>contain</span><i class="ck"></i><span>overlap</span>
          <i class="ck"></i><span>disjoint</span><i class="ck y"></i><span>are within</span>
          <i class="ck"></i><span>equal</span><i class="ck"></i><span>cross</span>
        </div>
        <p class="lb">By comparing to the features from</p>
        <div class="prow cmp"><div class="combo"><svg viewBox="0 0 16 12" class="pgi"><use href="#poly"/></svg>bistrol_bay []<i class="dn"></i></div>
          <svg class="swap" viewBox="0 0 24 22"><path d="M9 3.500H5q-2 0-2 2V14q0 2 2 2h4M15 18.500h4q2 0 2-2V8q0-2-2-2h-4" fill="none" stroke="#7fc488" stroke-width="3"/><path d="M15 1v10l-5-5zM9 11v10l5-5z" fill="#7fc488"/></svg>
          <svg class="wrench" viewBox="0 0 24 24"><path d="M12 12l10 10" stroke="#f1d878" stroke-width="4.500"/><path d="M6 7l7 6" stroke="#f0f0f0" stroke-width="4"/><path d="M2 2l4 2-1 3-4-1q1 5 6 4 5-1 3-6-3-4-8-2z" fill="#f0f0f0"/></svg>
          <span class="btn dots">...<i class="dn"></i></span></div>
        <div class="selonly"><i class="ck"></i><span>Selected features only</span></div>
        <p class="lb">Modify current selection by</p>
        <div class="prow last"><div class="combo">adding to current selection<i class="dn"></i></div></div>
      </div>
    </div>
    <div class="dsplit"><i class="tri"></i><i class="vg"></i></div>
    <div class="helpbox"><h2>Select by location</h2><p>This algorithm<br>creates a selection in<br>a vector layer. The<br>criteria for selecting<br>features is based on<br>the spatial<br>relationship<br>between each<br>feature and the<br>features in an<br>additional layer.</p></div>
  </div>
  <div class="drow prog"><div class="bar">0%</div><span class="btn w79 disabled">Cancel</span></div>
  <div class="drow acts">
    <span class="btn w79"><svg viewBox="0 0 14 14"><circle cx="7" cy="7" r="4.300" fill="none" stroke="#eee" stroke-width="3.400"/><circle cx="7" cy="7" r="4.300" fill="none" stroke="#5a6066" stroke-width="1.600" stroke-dasharray="3 3.750" stroke-dashoffset="1.500"/><path d="M1 1l3 3M13 1l-3 3M1 13l3-3M13 13l-3-3" stroke="#eee" stroke-width="1.800"/></svg><span><u>H</u>elp</span></span>
    <span class="btn batch">Run as Batch Process...</span>
    <span class="btn w79 run"><svg viewBox="0 0 14 14"><path d="M1 8l4 4L13 2" fill="none" stroke="#eee" stroke-width="1.300"/></svg><span>Run</span></span>
    <span class="btn w79 close"><svg viewBox="0 0 14 14"><circle cx="7" cy="7" r="6.500" fill="#ec7280"/><path d="M4.500 4.500l5 5M9.500 4.500l-5 5" stroke="#5d4a5a" stroke-width="1.300"/></svg><span><u>C</u>lose</span></span>
  </div>
</div>
</body>
</html>
```
FILE: styles.css
```css
* { box-sizing: border-box; }
html, body { margin: 0; }
body {
  width: 1920px; height: 1080px; overflow: hidden;
  display: flex; flex-direction: column; position: relative;
  background: #31363a; color: #e4e6e7;
  font: 13px/20px "Noto Sans", sans-serif;
}
i, b { display: block; flex: none; font-style: normal; }
p { margin: 0; }
svg { display: block; flex: none; }
.paints { position: absolute; width: 0; height: 0; }
.sprite { display: none; }

/* Desktop panel with global menu */
.menubar { height: 32px; flex: none; display: flex; align-items: center; padding-bottom: 1px; border-bottom: 1px solid #272b2e; }
.launcher { width: 126px; height: 20px; margin: 0 12px 0 5px; background: #111314; border-radius: 5px; display: flex; align-items: center; justify-content: center; gap: 20px; }
.menus { display: grid; grid-template-columns: 55px 36px 42px 47px 62px 57px 52px 52px 70px 40px 46px 79px 40px; font-size: 13.200px; }
.tray { margin-left: auto; display: flex; align-items: center; }
.tray svg { width: 14px; height: 14px; margin-right: 8px; }
.tray svg:nth-last-of-type(1) { margin: 0 8px 0 2px; }
.tray span { font-size: 14px; letter-spacing: -.1px; margin-right: 8px; color: #f0f0f0; white-space: nowrap; }
.tray span:last-child { margin-right: 0; }

.titlebar { height: 34px; flex: none; display: flex; align-items: center; padding: 0 10px 2px 7px; color: #8b8e90; }
.logo { width: 22px; height: 22px; }
.titlebar .logo { margin-right: 7px; }
.wb { width: 16px; height: 16px; }
.wb + .wb { margin-left: 10px; }
.wtitle { flex: 1; text-align: center; }

.toolbar { height: 39px; flex: none; display: flex; align-items: center; gap: 3px; padding: 0 0 1px 4px; border-top: 1px solid #747879; border-bottom: 1px solid #272b2e; background: linear-gradient(#363b3f, #2f3337); }
.toolbar svg { width: 24px; height: 24px; }
.t { width: 30px; height: 30px; display: flex; align-items: center; justify-content: center; position: relative; border: 1px solid transparent; border-radius: 3px; }
.t.on { background: #4a5056; border-color: #6b7075; }
.t.off svg { opacity: .25; }
.t.drop { margin-right: 12px; }
.t.drop::after { content: ""; position: absolute; left: 32px; top: 12px; border: 4px solid transparent; border-top: 5px solid #a5a7a9; border-bottom: 0; }
.t.drop.off::after { border-top-color: #5c6064; }
.t.drop.on::before { content: ""; position: absolute; left: 31px; top: -1px; width: 10px; height: 30px; border: 1px solid #6b7075; border-radius: 3px; background: #4a5056; }
.peach { color: #f3cf96; }
.grip { width: 5px; height: 20px; margin: 0 1px 0 7px; background: repeating-linear-gradient(#0000 0 2px, #33383c 2px 3px), repeating-linear-gradient(90deg, #74787b 0 1.500px, #33383c 1.500px 3px); }
.toolbar > .grip:first-child { margin-left: 1px; }
.sep { width: 4px; height: 20px; background: linear-gradient(90deg, transparent 1px, #2a2e31 1px 2px, #3c4145 2px 3px, transparent 3px); }

.work { height: 864px; flex: none; display: flex; border-top: 1px solid #747879; }

/* Left docks */
.left { width: 409px; display: flex; flex-direction: column; }
.dockhead { height: 19px; display: flex; align-items: center; padding: 0 2px 1px 4px; }
.dockhead span { flex: 1; }
.dockhead svg, .rhead svg { width: 11px; height: 11px; margin-left: 3px; }
.docktools { height: 31px; display: flex; align-items: center; gap: 9px; padding: 0 0 1px 8px; }
.docktools svg { width: 16px; height: 16px; }
.dn { width: 0; height: 0; border: 4px solid transparent; border-top: 5px solid #a9abad; border-bottom: 0; }
.upa { width: 0; height: 0; border: 4px solid transparent; border-bottom: 5px solid #a9abad; border-top: 0; }
.docktools .dn { margin: 0 -2px 0 -3px; }
.tree { background: #2a2e32; border: 1px solid #23272a; }
.browser { height: 163px; display: flex; }
.items { flex: 1; }
.br { height: 20px; display: flex; align-items: center; }
.br > i { width: 19px; height: 10px; }
.br svg { width: 16px; height: 16px; margin-right: 6px; }
.br > .tri { background: #a5a7a9; clip-path: polygon(6px 0, 10px 5px, 6px 10px); }
.gold { color: #ffe14a; }
.scroll { width: 13px; height: 100%; display: flex; flex-direction: column; background: #4a5055; border: 1px solid #33383c; border-width: 0 0 0 1px; }
.sbtn { height: 13px; background: #5a6066; border: 1px solid #6d7277; }
.sbtn::after { content: ""; display: block; margin: 3px auto 0; width: 0; border: 3.500px solid transparent; border-top: 4px solid #a9abad; border-bottom: 0; }
.sbtn.up::after { border: 3.500px solid transparent; border-bottom: 4px solid #a9abad; border-top: 0; }
.thumb { height: 66px; background: #565c64; border: 1px solid #6b7076; margin-top: 1px; }
.rest { flex: 1; }
.hgrip { height: 4px; width: 17px; margin: 0 0 2px 198px; border-bottom: 2px dotted #85888a; }
.lay { height: 20px; }
.layers { flex: 1; }
.lr { height: 20px; display: flex; align-items: center; font-weight: 700; font-style: italic; color: #86898b; padding-right: 7px; }
.lr.v { color: #f4f5f5; font-style: normal; }
.lr.n { color: #e4e6e7; font-weight: 400; font-style: normal; }
.lr.sel { background: #5a3555; }
.ex { width: 23px; height: 5px; }
.ex.open { background: #a9abad; clip-path: polygon(6px 0, 14px 0, 10px 5px); }
.sub .ex { width: 43px; }
.ck { width: 14px; height: 14px; margin-right: 6px; border: 1px solid #25282b; background: #2b2f32; border-radius: 1px; }
.ck.y::after { content: ""; display: block; width: 12px; height: 12px; background: #e0e2e3; clip-path: polygon(1.500px 5.500px, 3px 5px, 5px 8.500px, 9px 1px, 10.500px 1px, 5.800px 10.800px, 4.500px 10.800px); }
.ck.dim::after { background: #797c7e; }
.sw { width: 16px; height: 16px; margin-right: 6px; border: 1px solid #0005; }
.sw.big { width: 18px; height: 18px; }
.ln { width: 14px; height: 2px; margin-right: 6px; }
.pt { width: 6px; height: 6px; border-radius: 3px; margin: 0 11px 0 5px; }
.ic { width: 14px; height: 14px; margin-right: 8px; }
.pg { width: 16px; height: 12px; margin-right: 6px; }
.chip { width: 16px; height: 16px; margin-left: auto; background: #2f3337; border-radius: 2px; }
.chip::after { content: ""; display: block; margin: 6px 0 0 4px; width: 9px; height: 4px; border: 1px solid #42474b; border-bottom: 0; border-right: 0; }

.vsplit { width: 7px; padding: 425px 0 0 3px; }
.vsplit i { height: 18px; border-left: 2px dotted #85888a; }

/* Map canvas */
.canvas { width: 1062px; display: flex; flex-direction: column; }
.msg { height: 40px; flex: none; display: flex; align-items: center; gap: 9px; padding: 0 0 2px 8px; background: #dff0d8; border-bottom: 1px solid #9cb89a; color: #222; }
.msg svg { width: 26px; height: 22px; }
.msg a { color: #178a17; text-decoration: underline; }
.map { width: 1062px; height: 823px; }

/* Right docks */
.right { flex: 1; padding-left: 7px; display: flex; flex-direction: column; }
.rhead { flex: none; display: flex; justify-content: flex-end; padding: 3px 2px 0 0; }
.r1 { height: 50px; }
.rbox { flex: none; background: #2a2e32; border: 1px solid #24272a; display: flex; justify-content: flex-end; }
.strip { height: 26px; background: #2e3235; }
.list { height: 70px; }
.list .thumb { height: 38px; }
.r2 { height: 26px; padding-top: 10px; }
.b3 { height: 192px; }
.b4 { height: 70px; margin-top: 4px; }
.r3 { height: 28px; padding-top: 10px; }
.rtools { height: 30px; flex: none; padding: 5px 0 0 281px; }
.rtools svg { width: 14px; height: 15px; }
.colhead { height: 21px; flex: none; background: linear-gradient(#4e545b, #5a6068); border-top: 1px solid #777c80; margin-right: 1px; }
.rbox.fill { flex: 1; }
.modeform { height: 68px; flex: none; padding: 5px 6px 0 5px; }
.mrow { display: flex; align-items: center; height: 25px; margin-bottom: 7px; }
.mrow label { width: 42px; }
.mrow .combo { flex: 1; }
.mrow.off2 { color: #6f7376; }
.mrow.off2 label { width: 37px; }
.mrow .combo.small { flex: none; width: 77px; padding-left: 4px; }
.off2 .dn { border-top-color: #6f7376; }
.combo { height: 24px; display: flex; align-items: center; padding: 0 6px 0 4px; border: 1px solid #6f757a; border-radius: 3px; background: linear-gradient(#646b71, #50565c); box-shadow: 0 0 0 1px #262a2d; white-space: nowrap; }
.combo .dn { margin-left: auto; }
.combo svg { width: 16px; height: 16px; margin-right: 3px; }

/* Status bar */
.status { height: 33px; flex: none; display: grid; align-items: center; font-size: 11.100px; white-space: nowrap;
  grid-template-columns: 247px 833px 61px 106px 29px 30px 97px 24px 54px 98px 53px 96px 19px 52px 19px 80px 22px; }
.status > .ck { margin: 0; }
.locator { width: 240px; height: 24px; background: #2a2e32; border: 1px solid #24272a; display: flex; align-items: center; padding-left: 11px; gap: 8px; color: #96999b; font-size: 12.900px; }
.locator svg { width: 13px; height: 13px; }
.note { color: #0b0c0d; }
.field { width: 101px; height: 24px; display: flex; align-items: center; background: #292d30; border: 1px solid #23272a; border-radius: 2px; padding-left: 5px; }
.field span { flex: 1; }
.field b { align-self: stretch; background: #565c62; border: 1px solid #6b7176; display: flex; flex-direction: column; align-items: center; justify-content: center; gap: 4px; }
.fcombo, .fspin { width: 88px; }
.fcombo { padding-left: 3px; }
.fspin { padding-left: 4px; }
.fcombo b { width: 19px; }
.fspin b { width: 13px; }
.fspin .dn, .fspin .upa { border-left-width: 3px; border-right-width: 3px; }
.s16 { width: 16px; height: 16px; }
.lock { margin-left: 1px; }

/* Dialog window */
.dialog { position: absolute; z-index: 10; left: 1254px; top: 164px; width: 505px; height: 643px; background: #31363a; border-radius: 13px; box-shadow: 0 1px 8px 2px #0009; display: flex; flex-direction: column; padding: 0 15px; }
.dtitle { height: 36px; flex: none; display: flex; align-items: center; margin: 0 -5px 11px -8px; color: #eef0f0; }
.dtitle span { flex: 1; text-align: center; }
.dtitle .logo { margin-right: 8px; }
.dbody { height: 491px; flex: none; display: flex; }
.params { width: 320px; display: flex; flex-direction: column; }
.tabs { height: 29px; flex: none; display: flex; align-items: flex-end; gap: 1px; padding-left: 1px; }
.tab { height: 27px; line-height: 26px; width: 45px; text-align: center; background: #4b5157; border: 1px solid #6b7176; border-bottom: 0; border-radius: 3px 3px 0 0; }
.tab.cur { height: 29px; line-height: 27px; width: 94px; background: linear-gradient(#616870, #565d66); }
.pane { flex: 1; margin-left: 1px; border: 1px solid #7d8184; border-bottom-color: #24272a; padding: 4px 5px 0; }
.lb { height: 20px; line-height: 19px; margin-left: -1px; }
.prow { display: flex; align-items: center; height: 24px; gap: 8px; margin: 5px 0 6px; }
.prow .combo { width: 276px; padding-left: 5px; }
.btn { height: 25px; display: flex; align-items: center; justify-content: center; gap: 4px; border: 1px solid #6f757a; border-radius: 3px; background: linear-gradient(#626970, #50565c); box-shadow: 0 0 0 1px #262a2d; position: relative; white-space: nowrap; }
.btn u { text-underline-offset: 3px; }
.dots { width: 23px; height: 24px; }
.dots .dn { position: absolute; right: 1px; bottom: 2px; border-width: 3px; border-bottom-width: 0; }
.preds { display: grid; grid-template-columns: 19px 66px 19px 1fr; grid-auto-rows: 30px; align-items: center; margin: 2px 0 3px -1px; }
.preds .ck, .selonly .ck { margin: 0; background: #2b2e31; }
.prow.cmp { gap: 0; margin: 5px 0 9px; }
.cmp .combo { width: 204px; }
.combo .pgi { height: 12px; }
.swap { width: 22px; height: 20px; margin: 0 0 0 11px; }
.wrench { width: 24px; height: 24px; margin: 0 10px 0 13px; }
.selonly { display: flex; align-items: center; gap: 5px; height: 20px; color: #6c7073; margin: 0 0 8px -1px; }
.prow.last .combo { width: 307px; padding-left: 3px; }
.dsplit { width: 17px; }
.dsplit .tri { width: 6px; height: 8px; margin: 2px 0 0 5px; background: #b5b7b9; clip-path: polygon(0 0, 5px 4px, 0 8px); }
.dsplit .vg { height: 18px; margin: 228px 0 0 9px; border-left: 2px dotted #85888a; }
.helpbox { width: 138px; background: #2a2e32; border: 1px solid #24272a; padding: 5px 4px; color: #65696b; }
.helpbox h2 { margin: 0 0 12px; font-size: 19.500px; line-height: 27px; color: #55585b; }
.helpbox p { line-height: 18px; white-space: nowrap; }
.drow { display: flex; flex: none; }
.prog { margin-top: 31px; height: 26px; gap: 6px; }
.bar { width: 389px; height: 26px; line-height: 24px; text-align: center; background: #2a2e32; border: 1px solid #24272a; border-radius: 2px; }
.w79 { width: 79px; }
.disabled { color: #7b7f83; }
.acts { margin-top: 6px; gap: 8px; }
.btn svg { width: 14px; height: 14px; }
.batch { width: 166px; }
.run { margin-left: auto; margin-right: -1px; padding-right: 3px; }
.close { background: linear-gradient(#6c6570, #5a535f); border-color: #a2578f; padding-right: 3px; }
```
